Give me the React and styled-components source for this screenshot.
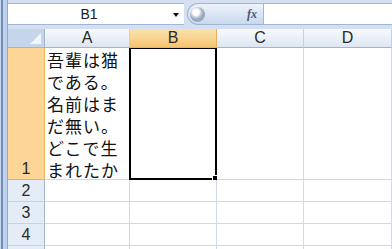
import React from 'react';
import styled, { createGlobalStyle } from 'styled-components';

const GlobalStyle = createGlobalStyle`
  html, body {
    margin: 0;
    padding: 0;
    background: #ffffff;
    overflow: hidden;
  }
`

const Frame = styled.div`
  display: flex;
  width: 392px;
  height: 249px;
  overflow: hidden;
  font-family: "Liberation Sans", "Noto Sans CJK JP", sans-serif;
`
const Edge = styled.div`
  width: 8px;
  flex: none;
  background: linear-gradient(to right, #c9d8ec 0 1px, #6d8fc0 1px 3px, #bfd0e8 3px 7px, #8fa8c8 7px 8px);
`
const Main = styled.div`
  flex: 1;
  display: flex;
  flex-direction: column;
  min-width: 0;
`
const FormulaBar = styled.div`
  display: flex;
  align-items: stretch;
  flex: none;
  height: 29px;
  box-sizing: border-box;
  padding: 3px 0 4px;
  background: #d4e0f1;
`
const NameBox = styled.div`
  position: relative;
  width: 176px;
  background: #ffffff;
  border-top: 1px solid #9fb6d4;
  border-bottom: 1px solid #9fb6d4;
  display: flex;
  align-items: center;
  justify-content: center;
  font-size: 14px;
  color: #1a1a1a;
  padding-right: 14px;
  box-sizing: border-box;
`
const Arrow = styled.span`
  position: absolute;
  right: 5px;
  top: 9px;
  width: 0;
  height: 0;
  border-left: 3px solid transparent;
  border-right: 3px solid transparent;
  border-top: 4px solid #111;
`
const FxPill = styled.div`
  width: 76px;
  margin-left: 3px;
  box-sizing: border-box;
  border-radius: 11px 0 0 11px;
  border: 1px solid #9fb6d4;
  border-right: 0;
  background: linear-gradient(to bottom, #eef3fa 0%, #dbe6f4 50%, #c9d8ec 100%);
  display: flex;
  align-items: center;
  justify-content: space-between;
  padding: 0 6px 0 2px;
`
const Knob = styled.span`
  width: 15px;
  height: 15px;
  border-radius: 50%;
  background: radial-gradient(circle at 40% 35%, #ffffff 0 3px, #c8d2de 5px, #9aa9bb 7px);
`
const Fx = styled.span`
  font-family: "Liberation Serif", serif;
  font-style: italic;
  font-weight: bold;
  font-size: 12px;
  color: #4b5870;
`
const FormulaInput = styled.div`
  flex: 1;
  background: #ffffff;
  border-top: 1px solid #9fb6d4;
  border-bottom: 1px solid #9fb6d4;
  border-left: 1px solid #9fb6d4;
`
const Sheet = styled.div`
  display: grid;
  flex: none;
  grid-template-columns: 37px 85px 87px 87px 88px;
  grid-template-rows: 19px 132px 22px 22px 22px 22px;
`
const Corner = styled.div`
  position: relative;
  background: #c4d5ec;
  border-right: 1px solid #9eb6ce;
  border-bottom: 1px solid #9eb6ce;
  box-sizing: border-box;
  &::after {
    content: '';
    position: absolute;
    right: 3px;
    bottom: 3px;
    width: 0;
    height: 0;
    border-left: 11px solid transparent;
    border-bottom: 11px solid #f2f6fb;
  }
`
const ColHead = styled.div`
  display: flex;
  align-items: center;
  justify-content: center;
  box-sizing: border-box;
  font-size: 16px;
  color: #2a2a2a;
  border-right: 1px solid ${p => (p.$active ? '#e1b160' : '#c5d2e3')};
  border-bottom: 1px solid ${p => (p.$active ? '#f2b659' : '#9eb6ce')};
  background: ${p => (p.$active
    ? 'linear-gradient(to bottom, #fbe1a9 0%, #f9d593 50%, #f6c36f 100%)'
    : 'linear-gradient(to bottom, #f7f9fc 0%, #ebf0f8 50%, #dde6f2 100%)')};
`
const RowHead = styled.div`
  display: flex;
  align-items: ${p => (p.$tall ? 'flex-end' : 'center')};
  justify-content: center;
  box-sizing: border-box;
  font-size: 16px;
  line-height: 20px;
  color: #2a2a2a;
  border-right: 1px solid ${p => (p.$active ? '#f2b659' : '#9eb6ce')};
  border-bottom: 1px solid ${p => (p.$active ? '#e1b160' : '#c5d2e3')};
  background: ${p => (p.$active ? '#fdd697' : '#e4ecf7')};
`
const Cell = styled.div`
  position: relative;
  box-sizing: border-box;
  border-right: 1px solid #d0d7e5;
  border-bottom: 1px solid #d0d7e5;
  background: #ffffff;
`
const TextCell = styled(Cell)`
  font-family: "Noto Sans CJK JP", sans-serif;
  font-size: 17px;
  letter-spacing: 1px;
  line-height: 22px;
  color: #111;
  padding: 1px 0 0 2px;
  overflow: hidden;
`
const Line = styled.div`
  height: 22px;
  white-space: nowrap;
`
const Selection = styled.div`
  position: absolute;
  left: -1px;
  top: 0;
  right: -1px;
  bottom: -1px;
  border: 2px solid #000;
  border-top-width: 1px;
  &::after {
    content: '';
    position: absolute;
    right: -4px;
    bottom: -4px;
    width: 5px;
    height: 5px;
    background: #000;
    border: 1px solid #fff;
  }
`

const cols = ['A', 'B', 'C', 'D']
const lines = ['吾輩は猫', 'である。', '名前はま', 'だ無い。', 'どこで生', 'まれたか']

export default function App() {
  return (
    <Frame>
      <GlobalStyle />
      <Edge />
      <Main>
        <FormulaBar>
          <NameBox>
            B1
            <Arrow />
          </NameBox>
          <FxPill>
            <Knob />
            <Fx>fx</Fx>
          </FxPill>
          <FormulaInput />
        </FormulaBar>
        <Sheet>
          <Corner />
          {cols.map(c => (
            <ColHead key={c} $active={c === 'B'}>{c}</ColHead>
          ))}
          <RowHead $tall $active>1</RowHead>
          <TextCell>
            {lines.map(l => <Line key={l}>{l}</Line>)}
          </TextCell>
          <Cell>
            <Selection />
          </Cell>
          <Cell />
          <Cell />
          {[2, 3, 4, 5].map(r => (
            <React.Fragment key={r}>
              <RowHead>{r < 5 ? r : ''}</RowHead>
              {cols.map(c => <Cell key={c} />)}
            </React.Fragment>
          ))}
        </Sheet>
      </Main>
    </Frame>
  );
}
